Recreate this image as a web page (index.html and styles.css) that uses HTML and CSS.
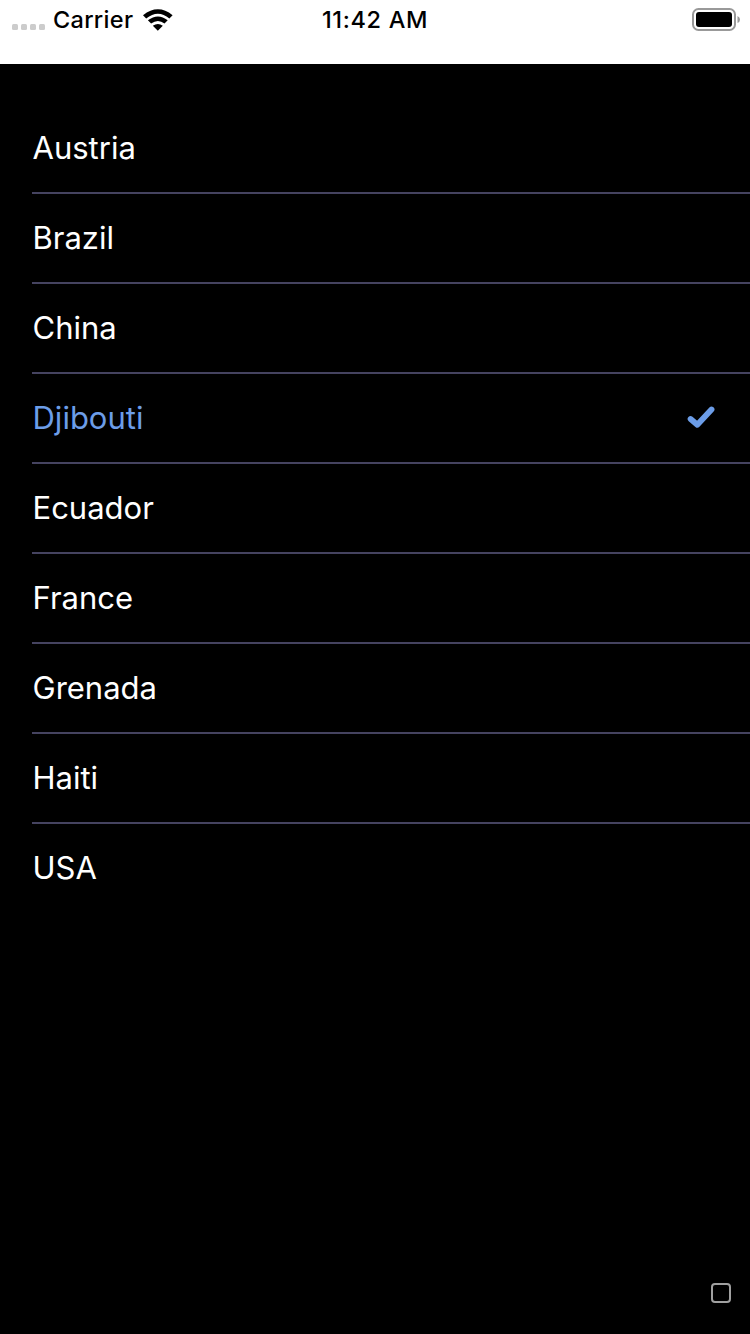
FILE: index.html
```html
<!DOCTYPE html>
<html lang="en">
<head>
<meta charset="utf-8">
<title>Countries</title>
<link rel="stylesheet" href="styles.css">
</head>
<body>
<div class="screen">
  <header class="status">
    <div class="status-left">
      <svg class="signal" width="33" height="6" viewBox="0 0 33 6"><rect width="6" height="6" rx="1.5"/><rect x="9" width="6" height="6" rx="1.5"/><rect x="18" width="6" height="6" rx="1.5"/><rect x="27" width="6" height="6" rx="1.5"/></svg>
      <span class="carrier">Carrier</span>
      <svg class="wifi" width="30" height="22" viewBox="0 0 30 22"><path d="M0 6.2Q15-5.6 29.6 6.2L26.4 9.5Q15-.2 3.2 9.5Z"/><path d="M4.9 11.3Q15 3.7 24.7 11.3L21.5 14.6Q15 9.6 8.1 14.6Z"/><path d="M9.8 16.8Q15 13.4 19.8 16.8L14.8 21.8Z"/></svg>
    </div>
    <time class="clock">11:42 AM</time>
    <svg class="battery" width="48" height="23" viewBox="0 0 48 23"><rect x="1" y="1" width="42" height="21" rx="5.5" fill="none" stroke="#999" stroke-width="2"/><rect x="4" y="4" width="36" height="15" rx="3"/><path d="M45.5 8Q48 9 48 11.5T45.5 15Z" fill="#999"/></svg>
  </header>
  <main class="content">
    <ul class="countries">
      <li class="row"><span class="name">Austria</span></li>
      <li class="row"><span class="name">Brazil</span></li>
      <li class="row"><span class="name">China</span></li>
      <li class="row selected"><span class="name">Djibouti</span><svg class="check" width="28" height="24" viewBox="0 0 28 24"><path d="M3.6 13L10.3 18.8L24.5 3.5"/></svg></li>
      <li class="row"><span class="name">Ecuador</span></li>
      <li class="row"><span class="name">France</span></li>
      <li class="row"><span class="name">Grenada</span></li>
      <li class="row"><span class="name">Haiti</span></li>
      <li class="row"><span class="name">USA</span></li>
    </ul>
    <span class="box"></span>
  </main>
</div>
</body>
</html>
```
FILE: styles.css
```css
body { margin: 0; }
.screen { width: 750px; height: 1334px; display: flex; flex-direction: column; background: #000; font-family: Inter, "Liberation Sans", sans-serif; }
.status { height: 64px; box-sizing: border-box; padding: 0 10px 25px 12px; display: grid; grid-template-columns: 1fr auto 1fr; align-items: center; background: #fff; color: #000; font-size: 23.5px; font-weight: 500; }
.status-left { display: flex; align-items: center; }
.signal { fill: #ccc; margin: 15px 8px 0 0; }
.carrier { width: 90px; letter-spacing: 0.3px; }
.wifi { margin-top: 1px; }
.clock { white-space: nowrap; letter-spacing: 0.65px; margin-left: -2px; }
.battery { justify-self: end; }
.content { flex: 1; display: flex; flex-direction: column; justify-content: space-between; }
.countries { list-style: none; margin: 40px 0 0; padding: 0 0 0 32px; }
.row { height: 90px; box-sizing: border-box; padding-right: 35px; border-bottom: 2px solid #454360; display: flex; align-items: center; justify-content: space-between; color: #fff; font-size: 31px; }
.row:last-child { border-bottom-color: transparent; }
.name { padding: 0 0 2px 0.5px; }
.selected { color: #6c9de8; }
.check { fill: none; stroke: #6c9de8; stroke-width: 5.8; stroke-linecap: round; stroke-linejoin: round; }
.box { align-self: flex-end; box-sizing: border-box; width: 20px; height: 20px; margin: 0 19px 31px 0; border: 2px solid #a0a0a0; border-radius: 4px; }
```
